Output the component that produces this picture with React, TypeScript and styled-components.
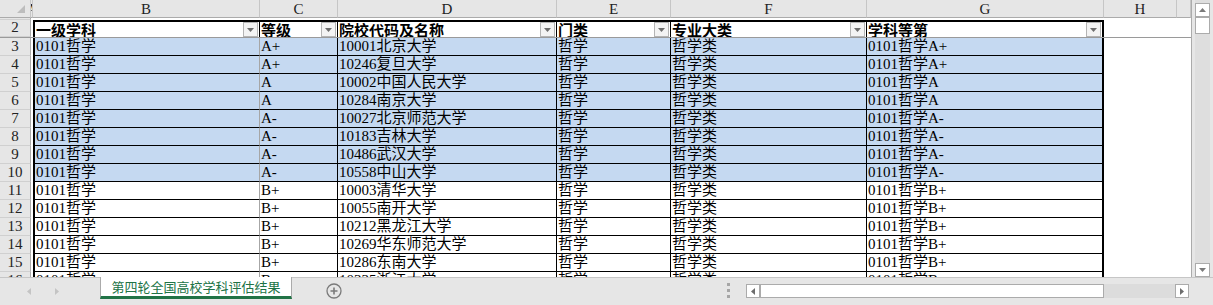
import styled, { createGlobalStyle } from 'styled-components';

const GlobalStyle = createGlobalStyle`
  html, body { margin: 0; padding: 0; background: #e6e6e6; }
  body { font-family: "Liberation Serif", "Noto Sans CJK SC", serif; }
`;

const COLS = [
    { key: 'A', w: 2, label: 'A' },
    { key: 'B', w: 227, label: 'B' },
    { key: 'C', w: 78, label: 'C' },
    { key: 'D', w: 219, label: 'D' },
    { key: 'E', w: 114, label: 'E' },
    { key: 'F', w: 196, label: 'F' },
    { key: 'G', w: 237, label: 'G' },
    { key: 'H', w: 73, label: 'H' },
    { key: 'I', w: 14, label: '' },
];

const HEADERS = ['一级学科', '等级', '院校代码及名称', '门类', '专业大类', '学科等第'];

const SCHOOLS: [string, string][] = [
    ['A+', '10001北京大学'],
    ['A+', '10246复旦大学'],
    ['A', '10002中国人民大学'],
    ['A', '10284南京大学'],
    ['A-', '10027北京师范大学'],
    ['A-', '10183吉林大学'],
    ['A-', '10486武汉大学'],
    ['A-', '10558中山大学'],
    ['B+', '10003清华大学'],
    ['B+', '10055南开大学'],
    ['B+', '10212黑龙江大学'],
    ['B+', '10269华东师范大学'],
    ['B+', '10286东南大学'],
    ['B+', '10335浙江大学'],
];

const Window = styled.div`
    width: 1213px;
    height: 305px;
    display: flex;
    flex-direction: column;
    background: #e6e6e6;
    overflow: hidden;
`;

const Main = styled.div`
    display: flex;
    height: 277px;
`;

const Sheet = styled.div`
    width: 1192px;
    height: 277px;
    box-sizing: border-box;
    border-right: 1px solid #ababab;
    background: #fff;
    overflow: hidden;
    display: flex;
    flex-direction: column;
`;

const Row = styled.div<{ $h: number }>`
    display: flex;
    flex: none;
    height: ${(p) => p.$h}px;
`;

const Corner = styled.div`
    width: 31px;
    flex: none;
    box-sizing: border-box;
    background: #e6e6e6;
    border-right: 1px solid #c6c6c6;
    border-bottom: 1px solid #ababab;
    display: flex;
    align-items: flex-end;
    justify-content: flex-end;
    padding: 0 5px 4px 0;
`;

const ColHead = styled.div<{ $w: number }>`
    width: ${(p) => p.$w}px;
    flex: none;
    box-sizing: border-box;
    background: #e6e6e6;
    border-right: 1px solid #c6c6c6;
    border-bottom: 1px solid #ababab;
    overflow: hidden;
    display: flex;
    justify-content: center;
    font-family: "Liberation Serif", serif;
    font-size: 15px;
    line-height: 18px;
    color: #222;
`;

const RowHead = styled.div`
    width: 31px;
    flex: none;
    box-sizing: border-box;
    background: #e6e6e6;
    border-right: 1px solid #ababab;
    border-bottom: 1px solid #d0d0d0;
    display: flex;
    align-items: flex-end;
    justify-content: center;
    font-family: "Liberation Serif", serif;
    font-size: 15px;
    line-height: 17px;
    color: #222;
`;

const Cell = styled.div<{ $w: number; $fill?: boolean; $first?: boolean; $last?: boolean; $soft?: boolean; $head?: boolean }>`
    width: ${(p) => p.$w}px;
    flex: none;
    box-sizing: border-box;
    background: ${(p) => (p.$fill ? '#c5d9f1' : '#fff')};
    border-left: ${(p) => (p.$first ? '2px solid #000' : 'none')};
    border-right: ${(p) => (p.$last ? '2px solid #000' : p.$soft ? '1px solid #a6a6a6' : '1px solid #000')};
    border-top: ${(p) => (p.$head ? '2px solid #000' : 'none')};
    border-bottom: ${(p) => (p.$head ? 'none' : '1px solid #000')};
    padding-left: 1px;
    display: flex;
    align-items: ${(p) => (p.$head ? 'center' : 'flex-end')};
    justify-content: space-between;
    overflow: hidden;
    white-space: nowrap;
    font-size: 15px;
    line-height: ${(p) => (p.$head ? '15px' : '17px')};
    font-weight: ${(p) => (p.$head ? 700 : 400)};
    color: #000;
`;

const HeadLabel = styled.span`
    padding-top: 3px;
`;

const Blank = styled.div<{ $w: number }>`
    width: ${(p) => p.$w}px;
    flex: none;
    background: #fff;
`;

const FreezeLine = styled.div`
    height: 1px;
    flex: none;
    background: #9a9a9a;
`;

const FilterButton = styled.div`
    width: 15px;
    height: 15px;
    flex: none;
    box-sizing: border-box;
    margin: 0 1px 0 4px;
    border: 1px solid #b4b4b4;
    background: #f3f3f3;
    display: flex;
    align-items: center;
    justify-content: center;
`;

const VScroll = styled.div`
    width: 15px;
    margin-left: 3px;
    padding-top: 3px;
    box-sizing: border-box;
    background: #dedede;
    display: flex;
    flex-direction: column;
`;

const ScrollBox = styled.div<{ $len?: number; $vertical?: boolean }>`
    flex: none;
    box-sizing: border-box;
    width: ${(p) => (p.$vertical ? '15px' : `${p.$len ?? 14}px`)};
    height: ${(p) => (p.$vertical ? `${p.$len ?? 14}px` : '14px')};
    background: #fff;
    border: 1px solid #ababab;
    display: flex;
    align-items: center;
    justify-content: center;
`;

const Track = styled.div`
    flex: 1;
`;

const TabBar = styled.div`
    height: 28px;
    box-sizing: border-box;
    border-top: 1px solid #c6c6c6;
    display: flex;
    align-items: flex-start;
`;

const NavArrows = styled.div`
    width: 100px;
    height: 27px;
    display: flex;
    align-items: center;
    padding-left: 26px;
    box-sizing: border-box;
    gap: 22px;
`;

const SheetTab = styled.div`
    width: 192px;
    height: 22px;
    margin-top: -1px;
    box-sizing: border-box;
    background: #fff;
    border-left: 1px solid #ababab;
    border-right: 1px solid #ababab;
    border-bottom: 3px solid #217346;
    display: flex;
    align-items: center;
    justify-content: center;
    font-family: "Noto Sans CJK SC", sans-serif;
    font-size: 13px;
    color: #217346;
`;

const AddSheet = styled.div`
    margin: 5px 0 0 34px;
    width: 16px;
    height: 16px;
`;

const Dots = styled.div`
    margin: 5px 0 0 auto;
    width: 3px;
    display: flex;
    flex-direction: column;
    gap: 3px;
    & > span {
        width: 3px;
        height: 3px;
        background: #a6a6a6;
    }
`;

const HScroll = styled.div`
    width: 443px;
    height: 14px;
    margin: 6px 24px 0 16px;
    display: flex;
    background: #dcdcdc;
`;

const Tri = ({ dir, color = '#6d6d6d', s = 7 }: { dir: 'up' | 'down' | 'left' | 'right'; color?: string; s?: number }) => {
    const pts = {
        up: '0,5 7,5 3.5,1',
        down: '0,1 7,1 3.5,5',
        left: '5,0 5,7 1,3.5',
        right: '1,0 1,7 5,3.5',
    }[dir];
    const vert = dir === 'up' || dir === 'down';
    return (
        <svg width={vert ? s : 6} height={vert ? 6 : s} viewBox={vert ? '0 0 7 6' : '0 0 6 7'}>
            <polygon points={pts} fill={color} />
        </svg>
    );
};

const tableCols = COLS.slice(1, 7);

const DataRow = ({ n, grade, school }: { n: number; grade: string; school: string }) => {
    const values = ['0101哲学', grade, school, '哲学', '哲学类', `0101哲学${grade}`];
    const fill = n <= 10;
    return (
        <Row $h={18}>
            <RowHead>{n}</RowHead>
            <Blank $w={COLS[0].w} />
            {tableCols.map((c, i) => (
                <Cell key={c.key} $w={c.w} $fill={fill} $first={i === 0} $last={i === 5} $soft={i === 0}>
                    {values[i]}
                </Cell>
            ))}
            <Blank $w={COLS[7].w} />
            <Blank $w={COLS[8].w} />
        </Row>
    );
};

export default function App() {
    return (
        <Window>
            <GlobalStyle />
            <Main>
                <Sheet>
                    <Row $h={18}>
                        <Corner>
                            <svg width="8" height="8" viewBox="0 0 8 8">
                                <polygon points="8,0 8,8 0,8" fill="#bdbdbd" />
                            </svg>
                        </Corner>
                        {COLS.map((c) => (
                            <ColHead key={c.key} $w={c.w}>{c.label}</ColHead>
                        ))}
                    </Row>
                    <Row $h={2}>
                        <RowHead />
                        {COLS.map((c) => (
                            <Blank key={c.key} $w={c.w} />
                        ))}
                    </Row>
                    <Row $h={17}>
                        <RowHead>2</RowHead>
                        <Blank $w={COLS[0].w} />
                        {tableCols.map((c, i) => (
                            <Cell key={c.key} $w={c.w} $head $first={i === 0} $last={i === 5}>
                                <HeadLabel>{HEADERS[i]}</HeadLabel>
                                <FilterButton>
                                    <Tri dir="down" />
                                </FilterButton>
                            </Cell>
                        ))}
                        <Blank $w={COLS[7].w} />
                        <Blank $w={COLS[8].w} />
                    </Row>
                    <FreezeLine />
                    {SCHOOLS.map(([grade, school], i) => (
                        <DataRow key={school} n={i + 3} grade={grade} school={school} />
                    ))}
                </Sheet>
                <VScroll>
                    <ScrollBox $vertical>
                        <Tri dir="up" color="#7a7a7a" />
                    </ScrollBox>
                    <ScrollBox $vertical $len={17} />
                    <Track />
                    <ScrollBox $vertical>
                        <Tri dir="down" color="#7a7a7a" />
                    </ScrollBox>
                </VScroll>
            </Main>
            <TabBar>
                <NavArrows>
                    <Tri dir="left" color="#c4c4c4" />
                    <Tri dir="right" color="#c4c4c4" />
                </NavArrows>
                <SheetTab>第四轮全国高校学科评估结果</SheetTab>
                <AddSheet>
                    <svg width="16" height="16" viewBox="0 0 16 16">
                        <circle cx="8" cy="8" r="7" fill="none" stroke="#7a7a7a" strokeWidth="1.3" />
                        <path d="M8 4.5v7M4.5 8h7" stroke="#7a7a7a" strokeWidth="1.6" />
                    </svg>
                </AddSheet>
                <Dots>
                    <span />
                    <span />
                    <span />
                </Dots>
                <HScroll>
                    <ScrollBox>
                        <Tri dir="left" color="#6d6d6d" />
                    </ScrollBox>
                    <ScrollBox $len={344} />
                    <Track />
                    <ScrollBox>
                        <Tri dir="right" color="#6d6d6d" />
                    </ScrollBox>
                </HScroll>
            </TabBar>
        </Window>
    );
}
